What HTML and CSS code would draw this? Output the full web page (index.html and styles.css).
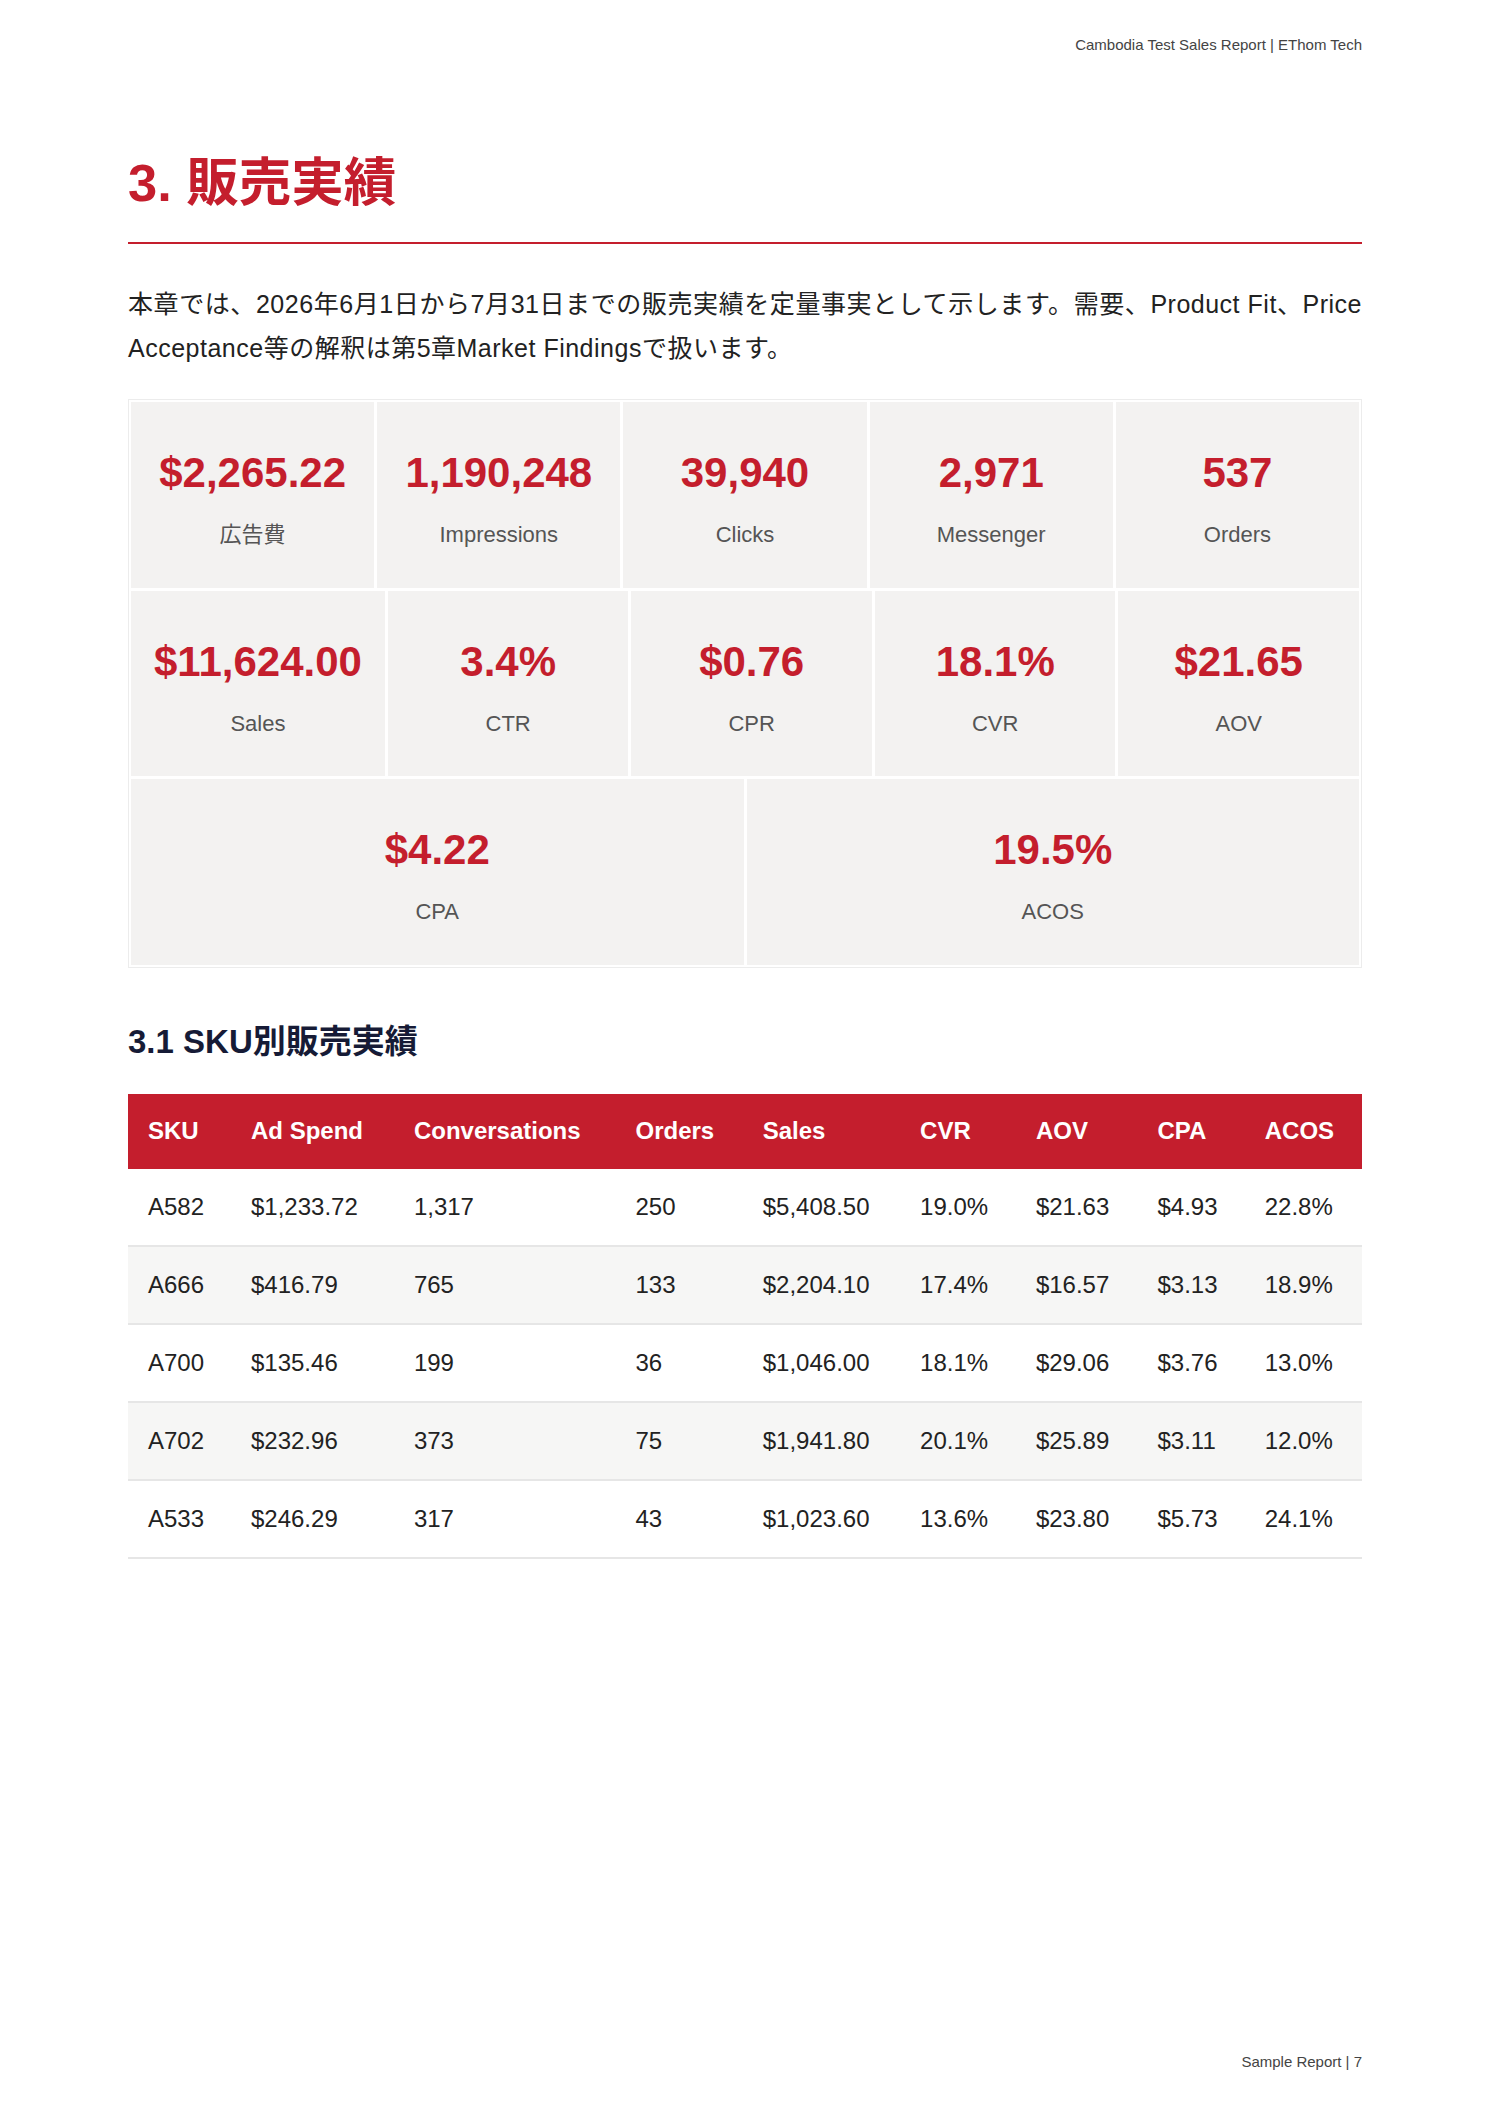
FILE: index.html
```html
<!DOCTYPE html>
<html lang="ja">
<head>
<meta charset="utf-8">
<title>3. 販売実績</title>
<link rel="stylesheet" href="styles.css">
</head>
<body>
<div class="page">
  <header class="running-head">Cambodia Test Sales Report | EThom Tech</header>

  <h1 class="chapter-title">3. 販売実績</h1>

  <p class="lead">本章では、2026年6月1日から7月31日までの販売実績を定量事実として示します。需要、Product Fit、Price Acceptance等の解釈は第5章Market Findingsで扱います。</p>

  <section class="kpi-board">
    <div class="kpi-row">
      <div class="kpi"><div class="kpi-value">$2,265.22</div><div class="kpi-label">広告費</div></div>
      <div class="kpi"><div class="kpi-value">1,190,248</div><div class="kpi-label">Impressions</div></div>
      <div class="kpi"><div class="kpi-value">39,940</div><div class="kpi-label">Clicks</div></div>
      <div class="kpi"><div class="kpi-value">2,971</div><div class="kpi-label">Messenger</div></div>
      <div class="kpi"><div class="kpi-value">537</div><div class="kpi-label">Orders</div></div>
    </div>
    <div class="kpi-row">
      <div class="kpi"><div class="kpi-value">$11,624.00</div><div class="kpi-label">Sales</div></div>
      <div class="kpi"><div class="kpi-value">3.4%</div><div class="kpi-label">CTR</div></div>
      <div class="kpi"><div class="kpi-value">$0.76</div><div class="kpi-label">CPR</div></div>
      <div class="kpi"><div class="kpi-value">18.1%</div><div class="kpi-label">CVR</div></div>
      <div class="kpi"><div class="kpi-value">$21.65</div><div class="kpi-label">AOV</div></div>
    </div>
    <div class="kpi-row">
      <div class="kpi"><div class="kpi-value">$4.22</div><div class="kpi-label">CPA</div></div>
      <div class="kpi"><div class="kpi-value">19.5%</div><div class="kpi-label">ACOS</div></div>
    </div>
  </section>

  <h2 class="section-title">3.1 SKU別販売実績</h2>

  <table class="sku-table">
    <thead>
      <tr><th>SKU</th><th>Ad Spend</th><th>Conversations</th><th>Orders</th><th>Sales</th><th>CVR</th><th>AOV</th><th>CPA</th><th>ACOS</th></tr>
    </thead>
    <tbody>
      <tr><td>A582</td><td>$1,233.72</td><td>1,317</td><td>250</td><td>$5,408.50</td><td>19.0%</td><td>$21.63</td><td>$4.93</td><td>22.8%</td></tr>
      <tr><td>A666</td><td>$416.79</td><td>765</td><td>133</td><td>$2,204.10</td><td>17.4%</td><td>$16.57</td><td>$3.13</td><td>18.9%</td></tr>
      <tr><td>A700</td><td>$135.46</td><td>199</td><td>36</td><td>$1,046.00</td><td>18.1%</td><td>$29.06</td><td>$3.76</td><td>13.0%</td></tr>
      <tr><td>A702</td><td>$232.96</td><td>373</td><td>75</td><td>$1,941.80</td><td>20.1%</td><td>$25.89</td><td>$3.11</td><td>12.0%</td></tr>
      <tr><td>A533</td><td>$246.29</td><td>317</td><td>43</td><td>$1,023.60</td><td>13.6%</td><td>$23.80</td><td>$5.73</td><td>24.1%</td></tr>
    </tbody>
  </table>

  <footer class="running-foot">Sample Report | 7</footer>
</div>
</body>
</html>
```

FILE: styles.css
```css
html, body {
  margin: 0;
  padding: 0;
  background: #ffffff;
}

body {
  font-family: "Liberation Sans", "Noto Sans CJK JP", sans-serif;
  color: #222222;
}

.page {
  box-sizing: border-box;
  min-height: 100vh;
  padding: 36px 128px 37px 128px;
  display: flex;
  flex-direction: column;
}

.running-head,
.running-foot {
  font-size: 15px;
  line-height: 18px;
  color: #444444;
  text-align: right;
}

.chapter-title {
  margin: 98px 0 0 0;
  padding-bottom: 28px;
  border-bottom: 2px solid #c41e2d;
  font-size: 52.5px;
  line-height: 62px;
  font-weight: 700;
  color: #c41e2d;
}

.lead {
  margin: 39px 0 0 0;
  font-size: 25px;
  line-height: 43.5px;
  letter-spacing: 0.5px;
  text-align: justify;
  color: #222222;
}

.kpi-board {
  margin-top: 29px;
  border: 1px solid #ececec;
  padding: 2px;
  display: flex;
  flex-direction: column;
  gap: 3px;
}

.kpi-row {
  display: flex;
  gap: 3px;
}

.kpi {
  flex: 1 1 0;
  background: #f3f2f1;
  padding: 46px 23px 39.5px;
  text-align: center;
}

.kpi-value {
  font-size: 42px;
  line-height: 50px;
  font-weight: 700;
  color: #c41e2d;
  white-space: nowrap;
}

.kpi-label {
  margin-top: 24px;
  font-size: 22px;
  line-height: 26px;
  color: #555555;
}

.section-title {
  margin: 55px 0 0 0;
  font-size: 33px;
  line-height: 38px;
  font-weight: 700;
  color: #161b36;
}

.sku-table {
  margin-top: 33px;
  width: 100%;
  border-collapse: collapse;
  font-size: 24px;
  line-height: 29px;
}

.sku-table th {
  background: #c41e2d;
  color: #ffffff;
  font-weight: 700;
  text-align: left;
  padding: 22px 20px 24px;
  white-space: nowrap;
}

.sku-table td {
  padding: 23px 20px 24px;
  text-align: left;
  color: #222222;
  border-bottom: 2px solid #e6e6e6;
  white-space: nowrap;
}

.sku-table tbody tr:nth-child(even) td {
  background: #f6f6f5;
}

.running-foot {
  margin-top: auto;
}
```
